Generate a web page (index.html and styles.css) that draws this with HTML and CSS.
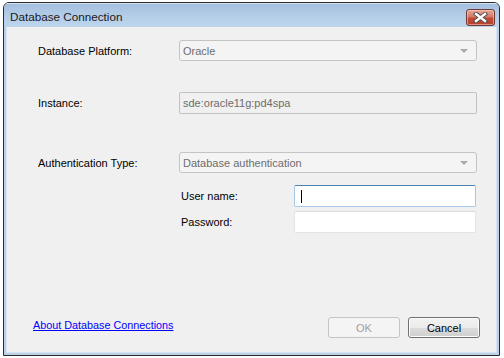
FILE: index.html
```html
<!DOCTYPE html>
<html>
<head>
<meta charset="utf-8">
<link rel="stylesheet" href="styles.css">
</head>
<body>
<div class="window">
  <div class="titlebar">
    <span class="title">Database Connection</span>
    <button class="close" aria-label="Close">
      <svg width="15" height="11" viewBox="0 0 15 11">
        <path d="M3 2 L12 9 M12 2 L3 9" stroke="#4a4a4a" stroke-width="4.2" stroke-linecap="square"/>
        <path d="M3 2 L12 9 M12 2 L3 9" stroke="#ffffff" stroke-width="2.4" stroke-linecap="square"/>
      </svg>
    </button>
  </div>
  <div class="client">
    <div class="row r1">
      <span class="label">Database Platform:</span>
      <div class="combo"><span>Oracle</span><i class="arrow"></i></div>
    </div>
    <div class="row r2">
      <span class="label">Instance:</span>
      <div class="field disabled"><span>sde:oracle11g:pd4spa</span></div>
    </div>
    <div class="row r3">
      <span class="label">Authentication Type:</span>
      <div class="combo"><span>Database authentication</span><i class="arrow"></i></div>
    </div>
    <div class="row sub r4">
      <span class="sublabel">User name:</span>
      <div class="input focus"><i class="caret"></i></div>
    </div>
    <div class="row sub r5">
      <span class="sublabel">Password:</span>
      <div class="input"></div>
    </div>
    <div class="footer">
      <a class="link" href="#">About Database Connections</a>
      <div class="buttons">
        <button class="btn ok" disabled>OK</button>
        <button class="btn cancel">Cancel</button>
      </div>
    </div>
  </div>
</div>
</body>
</html>
```

FILE: styles.css
```css
html, body {
  margin: 0;
  padding: 0;
  background: #ffffff;
  width: 504px;
  height: 358px;
  overflow: hidden;
}
body {
  padding: 2px 0 0 3px;
  box-sizing: border-box;
  font-family: "Liberation Sans", Arial, sans-serif;
  font-size: 11px;
  color: #000;
}
.window {
  width: 497px;
  height: 354px;
  border: 1px solid #2b2b2b;
  border-radius: 6px 6px 0 0;
  background: #bcd1e8;
  box-sizing: border-box;
  display: flex;
  flex-direction: column;
  overflow: hidden;
}
.titlebar {
  height: 24px;
  flex: none;
  background: linear-gradient(#a3bedd, #b6cee9 60%, #bdd4ed);
  display: flex;
  align-items: center;
  justify-content: space-between;
  padding: 0 4px 0 6px;
  box-shadow: inset 0 1px 0 #d6e4f3;
}
.title {
  font-family: "Liberation Sans", Arial, sans-serif;
  font-size: 11.7px;
  color: #1a1a1a;
  margin-top: 2px;
}
.close {
  width: 29px;
  height: 17px;
  margin-top: 5px;
  padding: 0;
  border: 1px solid #6e3a33;
  border-radius: 3px;
  background: linear-gradient(#e6a899, #d27a6a 45%, #c24b38 55%, #b8412e);
  box-shadow: inset 0 0 0 1px rgba(255,210,200,0.55);
  display: flex;
  align-items: center;
  justify-content: center;
}
.client {
  margin: 0 2px 2px 2px;
  flex: 1;
  background: #f0f0f0;
  border: 1px solid #d5e3f2;
  border-top: none;
  display: flex;
  flex-direction: column;
  padding: 0 0 14px 31px;
}
.row {
  display: flex;
  align-items: center;
}
.label {
  width: 141px;
  flex: none;
}
.r1 { margin-top: 13px; }
.r2 { margin-top: 31px; }
.r3 { margin-top: 38px; }
.r4 { margin-top: 12px; }
.r5 { margin-top: 4px; }
.sub { padding-left: 143px; }
.sublabel {
  width: 113px;
  flex: none;
}
.combo, .field {
  width: 298px;
  height: 21px;
  box-sizing: border-box;
  border: 1px solid #c4c4c4;
  border-radius: 3px;
  background: #f4f4f4;
  color: #6d6d6d;
  display: flex;
  align-items: center;
  justify-content: space-between;
  padding: 0 8px 0 3px;
}
.field {
  height: 22px;
  border-radius: 2px;
  border-color: #c2c2c2;
  background: #f0f0f0;
}
.arrow {
  width: 0;
  height: 0;
  border-left: 4px solid transparent;
  border-right: 4px solid transparent;
  border-top: 4px solid #a8a8a8;
}
.input {
  width: 182px;
  height: 22px;
  box-sizing: border-box;
  background: #ffffff;
  border: 1px solid #e0e3e8;
  border-top-color: #d8dbe0;
  border-radius: 2px;
  display: flex;
  align-items: center;
  padding-left: 6px;
}
.input.focus {
  border-color: #a8c9e6;
  border-top-color: #4b83b4;
}
.caret {
  width: 1px;
  height: 13px;
  background: #000;
}
.footer {
  margin-top: auto;
  display: flex;
  align-items: center;
  justify-content: space-between;
  padding-right: 16px;
}
.link {
  color: #0000ff;
  text-decoration: underline;
  font-size: 10.8px;
  margin-left: -5px;
  margin-bottom: 5px;
}
.buttons {
  display: flex;
  gap: 8px;
}
.btn {
  width: 72px;
  height: 21px;
  box-sizing: border-box;
  border-radius: 3px;
  font-family: "Liberation Sans", Arial, sans-serif;
  font-size: 11px;
  padding: 0;
}
.ok {
  border: 1px solid #c3c6c9;
  background: #f4f4f4;
  color: #a0a0a0;
}
.cancel {
  border: 1px solid #707070;
  background: linear-gradient(#f2f2f2, #ebebeb 50%, #dddddd 51%, #cfcfcf);
  box-shadow: inset 0 0 0 1px #fcfcfc;
  color: #000;
}
```
